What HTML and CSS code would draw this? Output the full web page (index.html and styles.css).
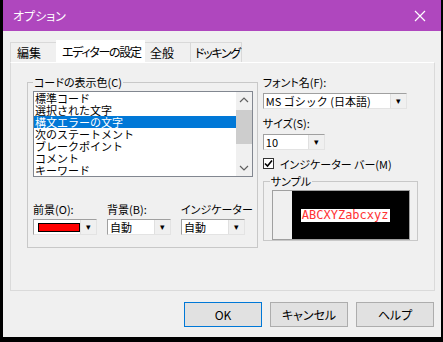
FILE: index.html
```html
<!DOCTYPE html>
<html lang="ja">
<head>
  <meta charset="UTF-8" />
  <meta name="viewport" content="width=device-width, initial-scale=1.0" />
  <title>オプション</title>
  <link rel="stylesheet" href="styles.css">
</head>
<body>
  <div class="dialog">
    <div class="titlebar">
      <span class="title">オプション</span>
      <svg class="close" width="12" height="12" viewBox="0 0 12 12">
        <path d="M1 1L11 11M11 1L1 11" stroke="#fff" stroke-width="1.2" fill="none" />
      </svg>
    </div>

    <div class="tabs">
      <div class="tab">編集</div>
      <div class="tab active">エディターの設定</div>
      <div class="tab">全般</div>
      <div class="tab">ドッキング</div>
    </div>

    <div class="panel">
      <!-- 左: コードの表示色 -->
      <fieldset class="group colors">
        <legend>コードの表示色(C)</legend>
        <div class="listbox">
          <ul class="items">
            <li>標準コード</li>
            <li>選択された文字</li>
            <li class="selected">構文エラーの文字</li>
            <li>次のステートメント</li>
            <li>ブレークポイント</li>
            <li>コメント</li>
            <li>キーワード</li>
          </ul>
          <div class="scrollbar">
            <svg width="16" height="16" viewBox="0 0 16 16"><path d="M4 10L8 6L12 10" stroke="#606060" stroke-width="1.2" fill="none" /></svg>
            <div class="track"><div class="thumb"></div></div>
            <svg width="16" height="16" viewBox="0 0 16 16"><path d="M4 6L8 10L12 6" stroke="#606060" stroke-width="1.2" fill="none" /></svg>
          </div>
        </div>
        <div class="pickers">
          <div class="picker">
            <label>前景(O):</label>
            <div class="combo small">
              <span class="value"><span class="swatch"></span></span>
              <span class="drop">▾</span>
            </div>
          </div>
          <div class="picker">
            <label>背景(B):</label>
            <div class="combo small">
              <span class="value">自動</span>
              <span class="drop">▾</span>
            </div>
          </div>
          <div class="picker">
            <label>インジケーター</label>
            <div class="combo small">
              <span class="value">自動</span>
              <span class="drop">▾</span>
            </div>
          </div>
        </div>
      </fieldset>

      <!-- 右: フォント -->
      <div class="font-side">
        <label>フォント名(F):</label>
        <div class="combo font-name">
          <span class="value">MS ゴシック (日本語)</span>
          <span class="drop">▾</span>
        </div>
        <label>サイズ(S):</label>
        <div class="combo font-size">
          <span class="value">10</span>
          <span class="drop">▾</span>
        </div>
        <div class="check">
          <span class="box">
            <svg width="9" height="9" viewBox="0 0 9 9"><path d="M1 4.5L3.5 7L8 1.5" stroke="#000" stroke-width="1.6" fill="none" /></svg>
          </span>
          インジケーター バー(M)
        </div>
        <fieldset class="group sample">
          <legend>サンプル</legend>
          <div class="preview">
            <div class="margin"></div>
            <div class="canvas"><span class="sample-text">ABCXYZabcxyz</span></div>
          </div>
        </fieldset>
      </div>
    </div>

    <div class="buttons">
      <button class="default">OK</button>
      <button>キャンセル</button>
      <button>ヘルプ</button>
    </div>
  </div>
</body>
</html>
```

FILE: styles.css
```css
body {
  margin: 0;
  padding: 0 0 0 3px;
  width: 443px;
  height: 342px;
  box-sizing: border-box;
  background-color: #000;
  overflow: hidden;
  font-family: "Noto Sans CJK JP", "Liberation Sans", sans-serif;
  font-size: 11px;
  color: #000;
}
.dialog {
  width: 438px;
  height: 337px;
  background-color: #f0f0f0;
  display: flex;
  flex-direction: column;
}
.titlebar {
  height: 31px;
  background-color: #af47be;
  color: #fff;
  display: flex;
  align-items: center;
  justify-content: space-between;
  padding: 0 15px 0 10px;
}
.title {
  font-size: 12px;
  font-feature-settings: "palt";
}
.tabs {
  display: flex;
  align-items: flex-end;
  height: 31px;
  padding-left: 7px;
}
.tab {
  box-sizing: border-box;
  height: 20px;
  line-height: 19px;
  border: 1px solid #d9d9d9;
  border-bottom: none;
  padding-left: 6px;
  margin-right: -1px;
  font-size: 12px;
  font-feature-settings: "palt";
  white-space: nowrap;
  background-color: #f0f0f0;
}
.tab:nth-child(1) { width: 49px; }
.tab:nth-child(3) { width: 48px; }
.tab:nth-child(4) {
  width: 52px;
  padding-left: 4px;
  letter-spacing: -1.3px;
}
.tab.active {
  height: 23px;
  line-height: 22px;
  width: 89px;
  padding-left: 5px;
  letter-spacing: -1.3px;
  margin: 0 -2px -1px -2px;
  background-color: #fff;
  border-color: #fff;
  position: relative;
  z-index: 1;
}
.panel {
  margin: 0 6px 0 7px;
  height: 229px;
  border: 1px solid #dadada;
  border-top-color: #fff;
  display: flex;
  padding: 13px 0 0 16px;
  box-sizing: border-box;
}
.group {
  margin: 0;
  border: 1px solid #c8c8c8;
  border-radius: 0;
  padding: 0;
  box-sizing: border-box;
}
.group legend {
  padding: 0 1px;
  margin-left: 0;
  line-height: 12px;
  white-space: nowrap;
  font-feature-settings: "palt";
}
.colors {
  width: 224px;
  height: 172px;
  padding: 3px 4px 0 5px;
}
.listbox {
  height: 86px;
  border: 1px solid #828790;
  background-color: #fff;
  display: flex;
  box-sizing: border-box;
}
.items {
  list-style: none;
  margin: 0;
  padding: 0;
  flex: 1;
  overflow: hidden;
}
.items li {
  height: 12px;
  line-height: 12px;
  padding-left: 1px;
  white-space: nowrap;
}
.items li.selected {
  background-color: #0078d7;
  color: #fff;
}
.scrollbar {
  width: 16px;
  background-color: #f0f0f0;
  display: flex;
  flex-direction: column;
}
.scrollbar svg {
  display: block;
}
.track {
  flex: 1;
  padding-top: 2px;
}
.thumb {
  height: 34px;
  background-color: #cdcdcd;
}
.pickers {
  display: flex;
  gap: 10px;
  margin-top: 26px;
}
.picker label {
  display: block;
  line-height: 12px;
  margin-bottom: 4px;
  font-feature-settings: "palt";
  white-space: nowrap;
}
.combo {
  height: 16px;
  border: 1px solid #a0a0a0;
  border-right-color: #e3e3e3;
  border-bottom-color: #e3e3e3;
  background-color: #fff;
  display: flex;
  box-sizing: border-box;
}
.combo .value {
  flex: 1;
  line-height: 14px;
  padding-left: 2px;
  display: flex;
  align-items: center;
  white-space: nowrap;
}
.combo .drop {
  width: 15px;
  background-color: #f0f0f0;
  border-left: 1px solid #e0e0e0;
  font-size: 9px;
  line-height: 14px;
  text-align: center;
  color: #000;
}
.combo.small {
  width: 64px;
}
.swatch {
  width: 40px;
  height: 7px;
  background-color: #ff0000;
  border: 1px solid #000;
  margin-left: 2px;
}
.font-side {
  margin-left: 5px;
  display: flex;
  flex-direction: column;
  width: 156px;
}
.font-side > label {
  line-height: 12px;
  margin-bottom: 5px;
  font-feature-settings: "palt";
}
.font-name {
  width: 144px;
  margin-bottom: 8px;
}
.font-size {
  width: 62px;
  margin-bottom: 7px;
}
.check {
  display: flex;
  align-items: center;
  gap: 6px;
  height: 13px;
  font-feature-settings: "palt";
}
.check .box {
  width: 11px;
  height: 11px;
  border: 1px solid #333;
  background-color: #fff;
  display: flex;
  align-items: center;
  justify-content: center;
  box-sizing: border-box;
}
.sample {
  margin-top: 5px;
  width: 155px;
  height: 66px;
  padding: 3px 7px 0 8px;
}
.sample legend {
  margin-left: -2px;
}
.preview {
  display: flex;
  height: 48px;
  border: 1px solid #a0a0a0;
}
.margin {
  width: 19px;
  background-color: #f0f0f0;
}
.canvas {
  flex: 1;
  background-color: #000;
  display: flex;
  align-items: center;
  padding-left: 9px;
}
.sample-text {
  background-color: #fff;
  color: #ff3333;
  font-family: "DejaVu Sans Mono", monospace;
  font-size: 12px;
  line-height: 13px;
  padding: 0 1px;
}
.buttons {
  display: flex;
  justify-content: flex-end;
  gap: 8px;
  padding: 11px 7px 0 0;
}
.buttons button {
  width: 78px;
  height: 25px;
  font-family: "Noto Sans CJK JP", "Liberation Sans", sans-serif;
  font-size: 12px;
  font-feature-settings: "palt";
  background-color: #e1e1e1;
  border: 1px solid #adadad;
  padding: 0;
  color: #000;
}
.buttons .default {
  border: 1px solid #0078d7;
}
```
